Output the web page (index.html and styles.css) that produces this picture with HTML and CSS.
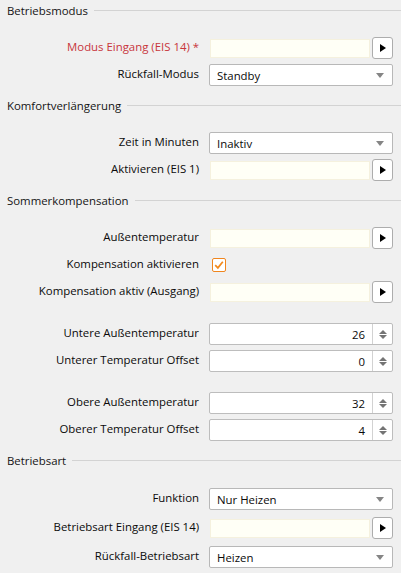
FILE: index.html
```html
<!DOCTYPE html>
<html lang="de">
<head>
<meta charset="utf-8">
<title>Parameter</title>
<link rel="stylesheet" href="styles.css">
</head>
<body>
<div class="panel">

  <section class="group">
    <h2 class="group-title">Betriebsmodus</h2>
    <div class="rows">
      <label class="lbl required">Modus Eingang (EIS 14) *</label>
      <div class="link">
        <span class="link-input"></span>
        <button class="link-btn" type="button"><svg width="6" height="8" viewBox="0 0 6 8"><path d="M0 0L6 4L0 8Z"/></svg></button>
      </div>

      <label class="lbl">Rückfall-Modus</label>
      <div class="select"><span>Standby</span><i class="caret"></i></div>
    </div>
  </section>

  <section class="group">
    <h2 class="group-title">Komfortverlängerung</h2>
    <div class="rows">
      <label class="lbl">Zeit in Minuten</label>
      <div class="select"><span>Inaktiv</span><i class="caret"></i></div>

      <label class="lbl">Aktivieren (EIS 1)</label>
      <div class="link">
        <span class="link-input"></span>
        <button class="link-btn" type="button"><svg width="6" height="8" viewBox="0 0 6 8"><path d="M0 0L6 4L0 8Z"/></svg></button>
      </div>
    </div>
  </section>

  <section class="group">
    <h2 class="group-title">Sommerkompensation</h2>
    <div class="rows">
      <label class="lbl">Außentemperatur</label>
      <div class="link">
        <span class="link-input"></span>
        <button class="link-btn" type="button"><svg width="6" height="8" viewBox="0 0 6 8"><path d="M0 0L6 4L0 8Z"/></svg></button>
      </div>

      <label class="lbl">Kompensation aktivieren</label>
      <div class="check-cell">
        <span class="check"><svg width="12" height="12" viewBox="0 0 12 12"><path d="M2.2 6.2L4.9 8.9L9.8 2.8"/></svg></span>
      </div>

      <label class="lbl">Kompensation aktiv (Ausgang)</label>
      <div class="link">
        <span class="link-input"></span>
        <button class="link-btn" type="button"><svg width="6" height="8" viewBox="0 0 6 8"><path d="M0 0L6 4L0 8Z"/></svg></button>
      </div>

      <div class="spacer"></div>

      <label class="lbl">Untere Außentemperatur</label>
      <div class="spin"><span class="spin-val">26</span><span class="spin-arrows"><i class="up"></i><i class="down"></i></span></div>

      <label class="lbl">Unterer Temperatur Offset</label>
      <div class="spin"><span class="spin-val">0</span><span class="spin-arrows"><i class="up"></i><i class="down"></i></span></div>

      <div class="spacer"></div>

      <label class="lbl">Obere Außentemperatur</label>
      <div class="spin"><span class="spin-val">32</span><span class="spin-arrows"><i class="up"></i><i class="down"></i></span></div>

      <label class="lbl">Oberer Temperatur Offset</label>
      <div class="spin"><span class="spin-val">4</span><span class="spin-arrows"><i class="up"></i><i class="down"></i></span></div>
    </div>
  </section>

  <section class="group">
    <h2 class="group-title">Betriebsart</h2>
    <div class="rows rows-loose">
      <label class="lbl">Funktion</label>
      <div class="select"><span>Nur Heizen</span><i class="caret"></i></div>

      <label class="lbl">Betriebsart Eingang (EIS 14)</label>
      <div class="link">
        <span class="link-input"></span>
        <button class="link-btn" type="button"><svg width="6" height="8" viewBox="0 0 6 8"><path d="M0 0L6 4L0 8Z"/></svg></button>
      </div>

      <label class="lbl">Rückfall-Betriebsart</label>
      <div class="select"><span>Heizen</span><i class="caret"></i></div>
    </div>
  </section>

</div>
</body>
</html>
```

FILE: styles.css
```css
html, body {
  margin: 0;
  padding: 0;
  background: #f0f0f0;
}

body {
  font-family: "Open Sans", "Noto Sans", sans-serif;
  font-size: 11.4px;
  color: #0a0a0a;
}

.panel {
  width: 401px;
}

/* group heading with a rule running to the right edge */
.group-title {
  display: flex;
  align-items: center;
  gap: 6px;
  height: 22px;
  margin: 0;
  padding-left: 7px;
  font-size: 11.4px;
  font-weight: normal;
  color: #141414;
  line-height: 22px;
}

.group-title::after {
  content: "";
  flex: 1;
  height: 1px;
  margin-top: -2px;
  background: #d3d3d3;
}

.rows {
  display: grid;
  grid-template-columns: 199px 184px;
  column-gap: 10px;
  row-gap: 5px;
  padding: 15px 0 9px;
}

.rows-loose {
  padding-top: 16px;
  row-gap: 7px;
}

.lbl {
  align-self: center;
  text-align: right;
  white-space: nowrap;
  line-height: 16px;
  margin-top: -2px;
}

.lbl.required {
  color: #c8353c;
}

.spacer {
  grid-column: 1 / -1;
  height: 10px;
}

/* group-address field with a picker button */
.link {
  display: flex;
  align-items: center;
  height: 22px;
}

.link-input {
  box-sizing: border-box;
  width: 161px;
  height: 19px;
  margin-left: 1px;
  background: #fffff6;
  border: 1px solid #f5f1de;
}

.link-btn {
  box-sizing: border-box;
  display: flex;
  align-items: center;
  justify-content: center;
  width: 21px;
  height: 22px;
  margin-left: 2px;
  padding: 0;
  background: #fff;
  border: 1px solid #adadad;
  border-radius: 3px;
}

.link-btn svg {
  display: block;
  fill: #000;
}

/* drop-down */
.select {
  box-sizing: border-box;
  display: flex;
  align-items: center;
  justify-content: space-between;
  height: 22px;
  padding: 0 8px 0 7px;
  background: #fff;
  border: 1px solid #b8b8b8;
  border-radius: 2px;
}

.caret {
  width: 0;
  height: 0;
  border-left: 4px solid transparent;
  border-right: 4px solid transparent;
  border-top: 5px solid #858585;
}

/* checkbox */
.check-cell {
  display: flex;
  align-items: center;
  height: 22px;
}

.check {
  box-sizing: border-box;
  display: flex;
  align-items: center;
  justify-content: center;
  width: 14px;
  height: 14px;
  margin-left: 3px;
  background: #fff;
  border: 1px solid #f0861e;
  border-radius: 2px;
}

.check svg {
  display: block;
  fill: none;
  stroke: #f28a1e;
  stroke-width: 1.7;
}

/* numeric spinner */
.spin {
  box-sizing: border-box;
  display: flex;
  height: 22px;
  background: #fff;
  border: 1px solid #bdbdbd;
  border-radius: 2px;
}

.spin-val {
  flex: 1;
  align-self: center;
  text-align: right;
  padding-right: 7px;
}

.spin-arrows {
  display: flex;
  flex-direction: column;
  align-items: center;
  justify-content: center;
  gap: 1px;
  width: 19px;
  border-left: 1px solid #d2d2d2;
}

.spin-arrows i {
  width: 0;
  height: 0;
  border-left: 4px solid transparent;
  border-right: 4px solid transparent;
}

.spin-arrows .up {
  border-bottom: 4px solid #747474;
}

.spin-arrows .down {
  border-top: 4px solid #747474;
}
```
